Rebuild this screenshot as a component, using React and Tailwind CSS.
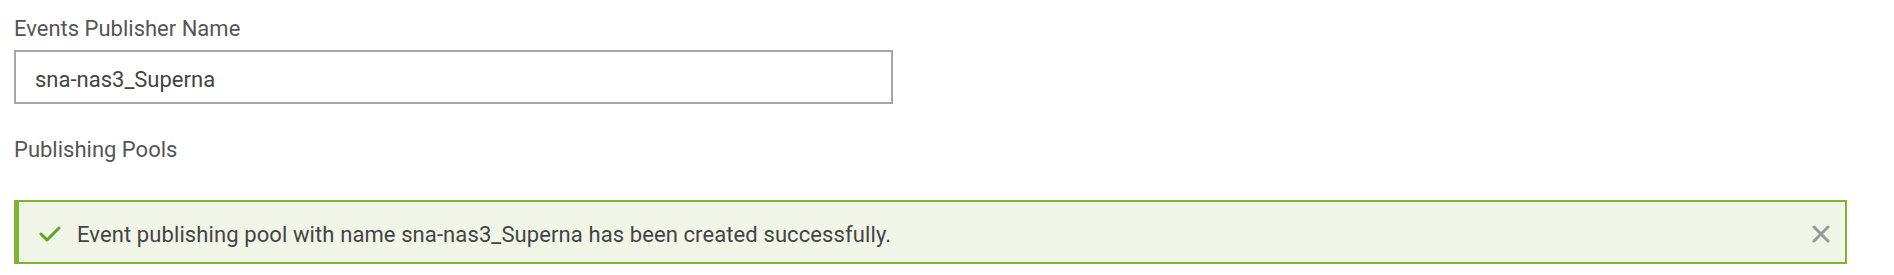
export default function App() {
  return (
    <div className="min-h-[275px] bg-white px-[14px] pt-[15px] font-['Roboto',sans-serif] text-[#555]">
      <label className="block text-[22px] leading-[26px] pt-[1px]">Events Publisher Name</label>
      <div className="mt-[8px] w-[879px] h-[54px] border-2 border-[#a6a6a6] flex items-center px-[19px]">
        <span className="text-[22px] text-[#444] pt-[4px]">sna-nas3_Superna</span>
      </div>
      <div className="mt-[31px] text-[22px] leading-[26px] pt-[2px]">Publishing Pools</div>
      <div className="mt-[37px] w-[1833px] h-[64px] flex items-center border-2 border-l-[5px] border-[#7cb530] bg-[#f1f5e8] pl-[20px] pr-[15px]">
        <svg width="22" height="16" viewBox="0 0 22 16" className="shrink-0 mt-[3px]">
          <polyline points="2,8 8,14 20,2" fill="none" stroke="#5aa51c" strokeWidth="3" strokeLinecap="round" strokeLinejoin="round" />
        </svg>
        <span className="ml-[16px] text-[22px] tracking-[0.1px] text-[#444] flex-1 pt-[4px]">
          Event publishing pool with name sna-nas3_Superna has been created successfully.
        </span>
        <svg width="18" height="18" viewBox="0 0 18 18" className="shrink-0 mt-[4px]">
          <path d="M2 2 L16 16 M16 2 L2 16" stroke="#999" strokeWidth="3" strokeLinecap="round" />
        </svg>
      </div>
    </div>
  );
}
